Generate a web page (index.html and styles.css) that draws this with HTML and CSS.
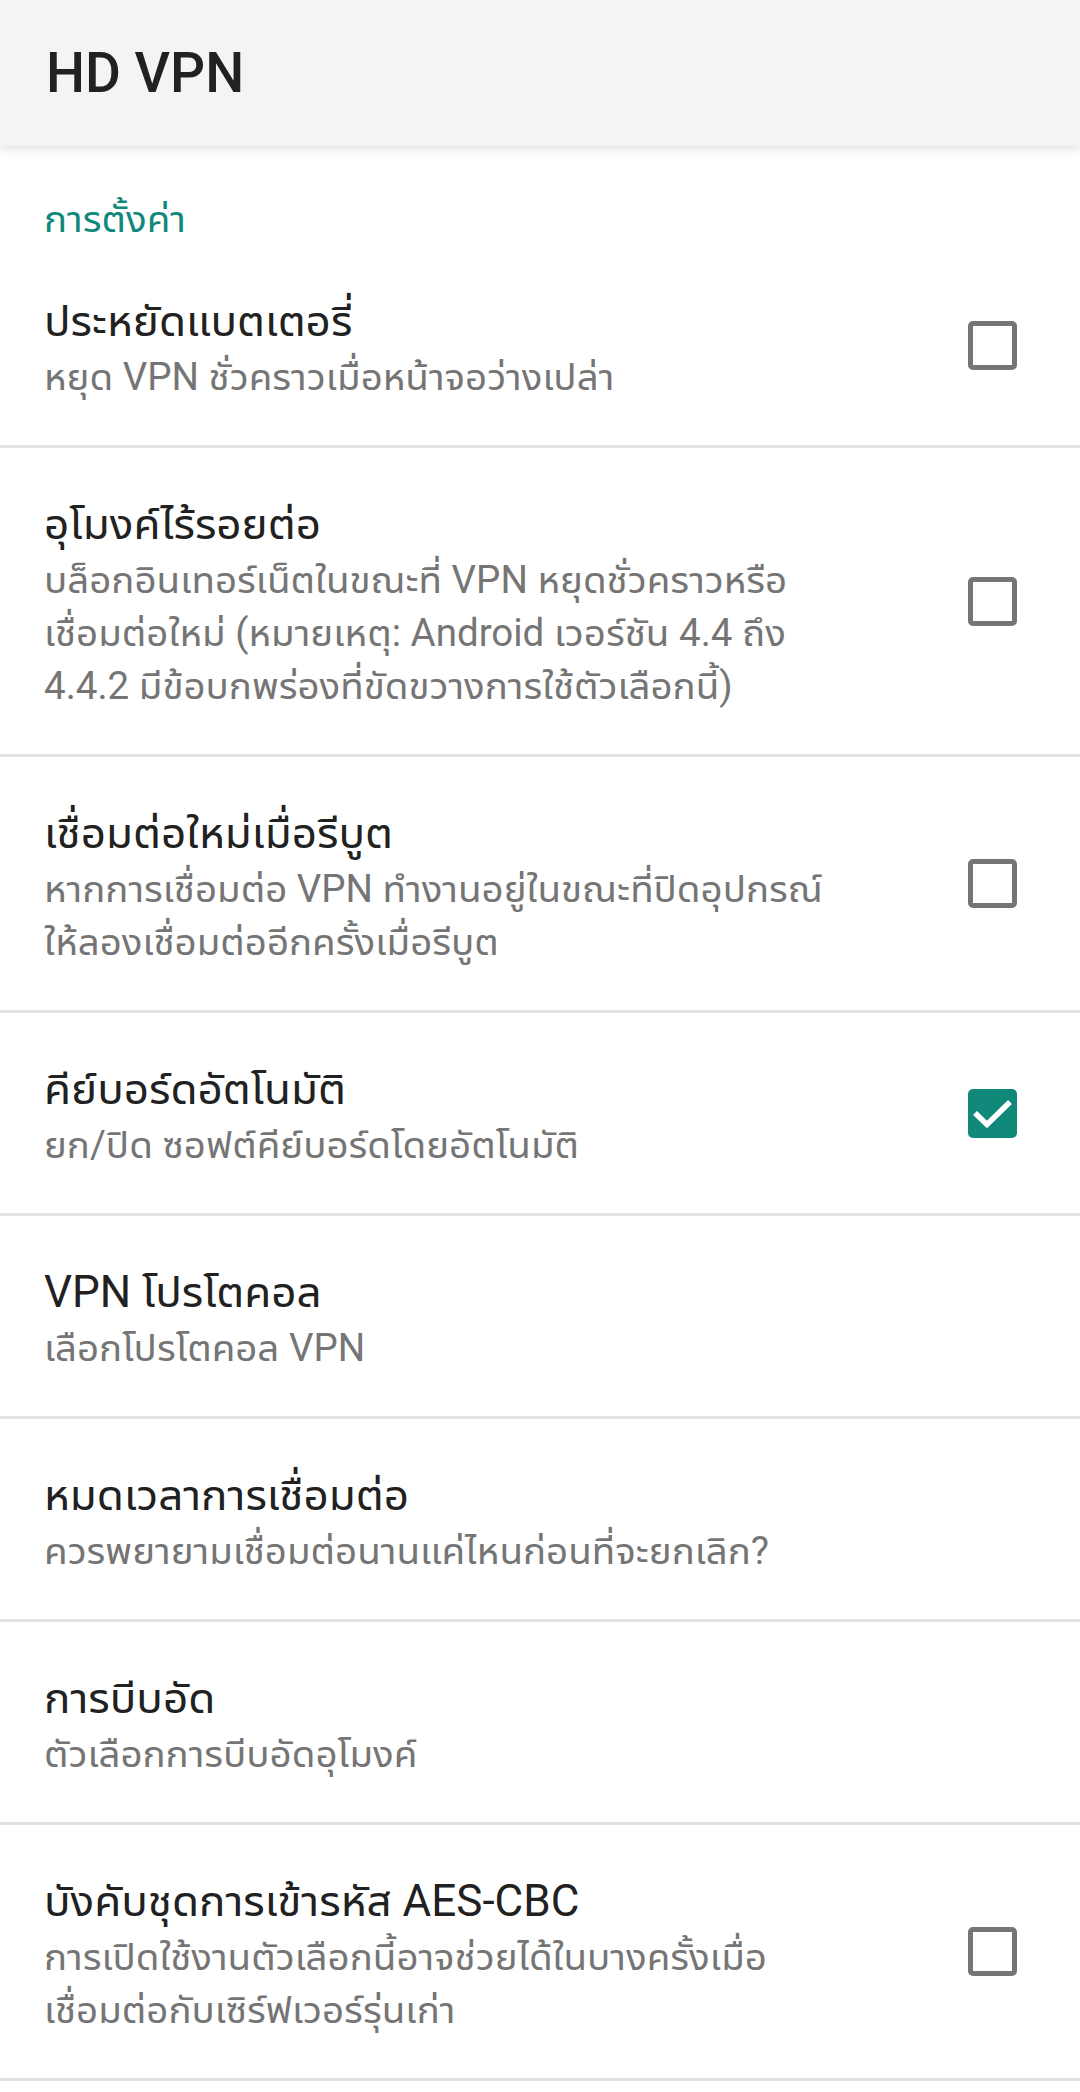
FILE: index.html
```html
<!DOCTYPE html>
<html lang="th">

<head>
    <meta charset="UTF-8">
    <meta name="viewport" content="width=device-width, initial-scale=1.0">
    <title>HD VPN</title>
    <link rel="stylesheet" href="styles.css">
</head>

<body>
    <div class="appBar">HD VPN</div>

    <div class="prefs">
        <div class="category">การตั้งค่า</div>

        <div class="pref">
            <div class="prefText">
                <div class="prefTitle">ประหยัดแบตเตอรี่</div>
                <div class="prefSummary">หยุด VPN ชั่วคราวเมื่อหน้าจอว่างเปล่า</div>
            </div>
            <div class="widget"><span class="box"></span></div>
        </div>

        <div class="pref">
            <div class="prefText">
                <div class="prefTitle">อุโมงค์ไร้รอยต่อ</div>
                <div class="prefSummary">บล็อกอินเทอร์เน็ตในขณะที่ VPN หยุดชั่วคราวหรือ<br>เชื่อมต่อใหม่ (หมายเหตุ: Android เวอร์ชัน 4.4 ถึง<br>4.4.2 มีข้อบกพร่องที่ขัดขวางการใช้ตัวเลือกนี้)</div>
            </div>
            <div class="widget"><span class="box"></span></div>
        </div>

        <div class="pref">
            <div class="prefText">
                <div class="prefTitle">เชื่อมต่อใหม่เมื่อรีบูต</div>
                <div class="prefSummary">หากการเชื่อมต่อ VPN ทำงานอยู่ในขณะที่ปิดอุปกรณ์<br>ให้ลองเชื่อมต่ออีกครั้งเมื่อรีบูต</div>
            </div>
            <div class="widget"><span class="box"></span></div>
        </div>

        <div class="pref">
            <div class="prefText">
                <div class="prefTitle">คีย์บอร์ดอัตโนมัติ</div>
                <div class="prefSummary">ยก/ปิด ซอฟต์คีย์บอร์ดโดยอัตโนมัติ</div>
            </div>
            <div class="widget">
                <span class="box checked">
                    <svg viewBox="0 0 49 49" width="49" height="49">
                        <path d="M7 24 L19 35.5 L42 13" fill="none" stroke="#fff" stroke-width="5.5" />
                    </svg>
                </span>
            </div>
        </div>

        <div class="pref">
            <div class="prefText">
                <div class="prefTitle">VPN โปรโตคอล</div>
                <div class="prefSummary">เลือกโปรโตคอล VPN</div>
            </div>
        </div>

        <div class="pref">
            <div class="prefText">
                <div class="prefTitle">หมดเวลาการเชื่อมต่อ</div>
                <div class="prefSummary">ควรพยายามเชื่อมต่อนานแค่ไหนก่อนที่จะยกเลิก?</div>
            </div>
        </div>

        <div class="pref">
            <div class="prefText">
                <div class="prefTitle">การบีบอัด</div>
                <div class="prefSummary">ตัวเลือกการบีบอัดอุโมงค์</div>
            </div>
        </div>

        <div class="pref">
            <div class="prefText">
                <div class="prefTitle">บังคับชุดการเข้ารหัส AES-CBC</div>
                <div class="prefSummary">การเปิดใช้งานตัวเลือกนี้อาจช่วยได้ในบางครั้งเมื่อ<br>เชื่อมต่อกับเซิร์ฟเวอร์รุ่นเก่า</div>
            </div>
            <div class="widget"><span class="box"></span></div>
        </div>
    </div>
</body>

</html>
```

FILE: styles.css
```css
body {
    margin: 0;
    background-color: #fff;
    font-family: Roboto, "Noto Sans Thai UI", "Noto Sans Thai", "Noto Sans", sans-serif;
    color: #212121;
}

.appBar {
    position: relative;
    z-index: 1;
    height: 146px;
    box-sizing: border-box;
    padding-left: 46px;
    display: flex;
    align-items: center;
    background-color: #f4f4f4;
    font-size: 55px;
    font-weight: 500;
    box-shadow: 0 3px 10px rgba(0, 0, 0, 0.12);
}

.category {
    padding: 46px 44px 0;
    font-size: 38.5px;
    line-height: 53px;
    color: #10897a;
}

.pref {
    display: flex;
    align-items: center;
    padding: 0 56px 0 44px;
    border-bottom: 3px solid #e2e2e2;
}

.prefText {
    flex: 1;
    padding: 48px 0 42px;
}

.prefTitle {
    font-size: 44px;
    line-height: 56px;
    color: #212121;
}

.prefSummary {
    margin-top: 1px;
    font-size: 38.5px;
    line-height: 53px;
    color: #757575;
}

.widget {
    width: 63px;
    margin-left: 60px;
    display: flex;
    justify-content: center;
}

.box {
    width: 49px;
    height: 49px;
    box-sizing: border-box;
    border: 5.5px solid #757575;
    border-radius: 5px;
}

.box.checked {
    border: none;
    background-color: #10897a;
}

.box svg {
    display: block;
}
```
